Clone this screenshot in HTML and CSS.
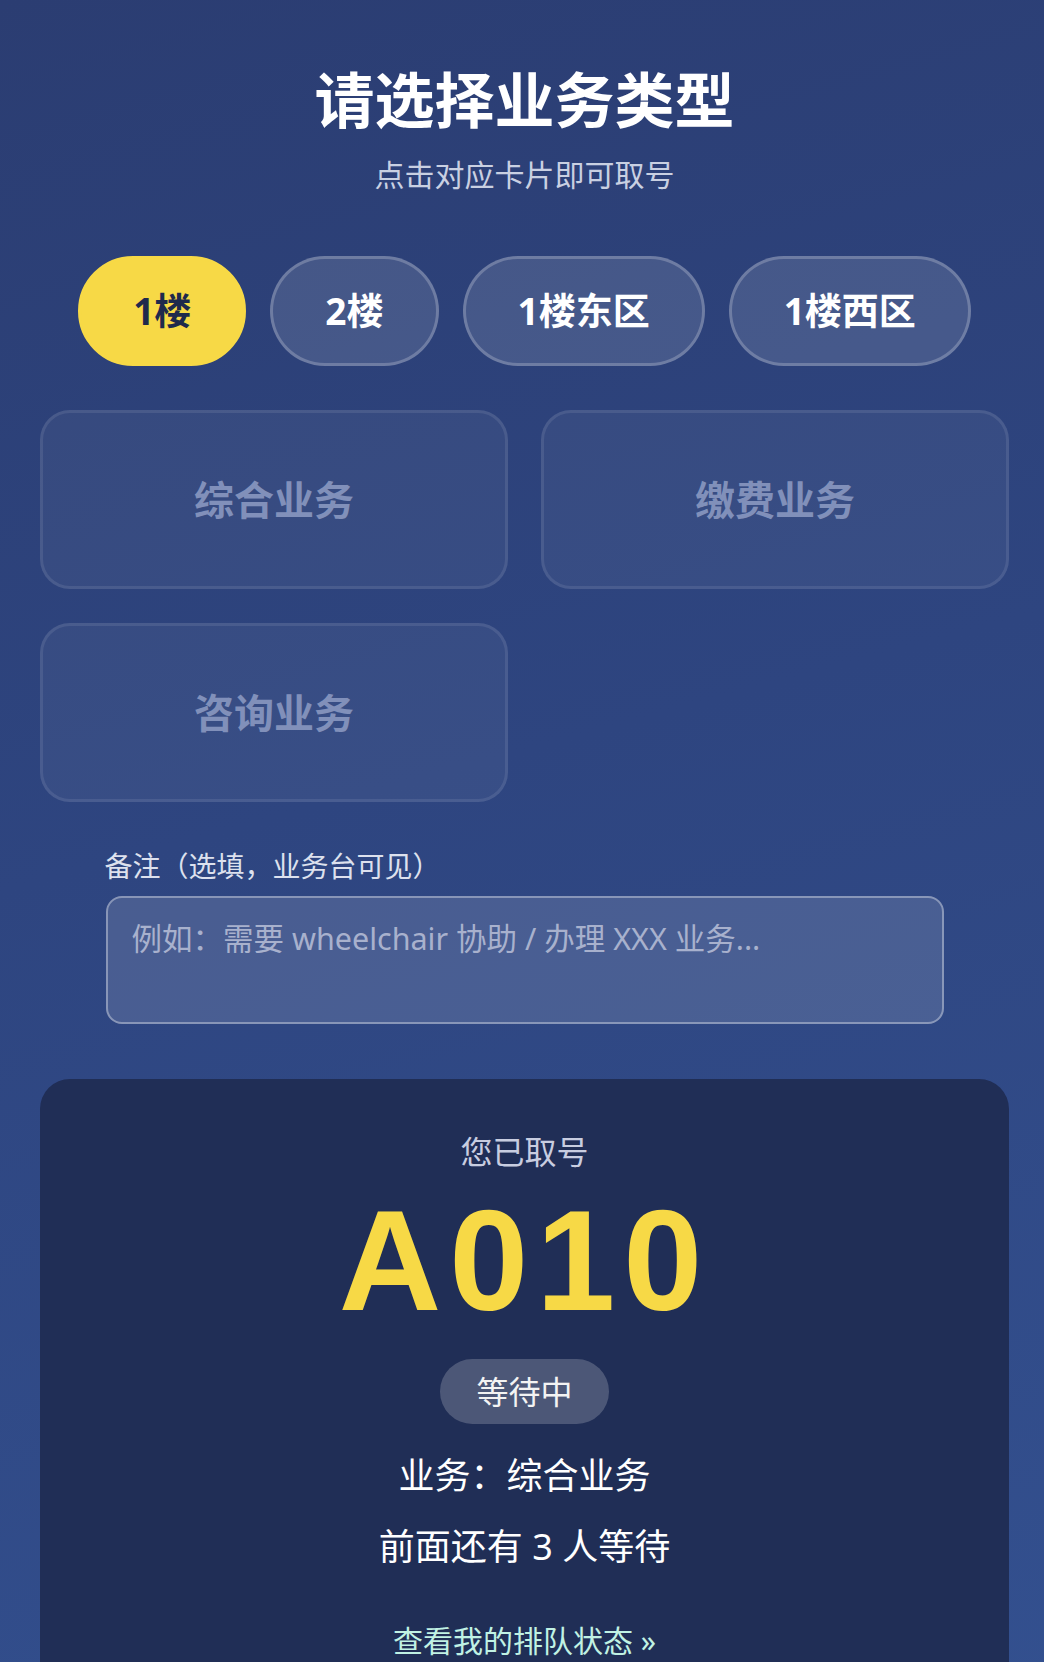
FILE: index.html
```html
<!DOCTYPE html>
<html lang="zh-CN">
<head>
<meta charset="UTF-8">
<meta name="viewport" content="width=device-width, initial-scale=1.0">
<title>取号</title>
<link rel="stylesheet" href="styles.css">
</head>
<body>
<div class="page">
  <header class="header">
    <h1>请选择业务类型</h1>
    <p class="subtitle">点击对应卡片即可取号</p>
  </header>

  <div class="floors">
    <button class="floor active">1楼</button>
    <button class="floor">2楼</button>
    <button class="floor">1楼东区</button>
    <button class="floor">1楼西区</button>
  </div>

  <div class="services">
    <button class="service" disabled>综合业务</button>
    <button class="service" disabled>缴费业务</button>
    <button class="service" disabled>咨询业务</button>
  </div>

  <div class="remark">
    <label class="remark-label" for="remark">备注（选填，业务台可见）</label>
    <textarea id="remark" class="remark-input" placeholder="例如：需要 wheelchair 协助 / 办理 XXX 业务..."></textarea>
  </div>

  <section class="ticket">
    <p class="ticket-title">您已取号</p>
    <div class="ticket-number">A010</div>
    <span class="ticket-status">等待中</span>
    <p class="ticket-line">业务：综合业务</p>
    <p class="ticket-line">前面还有 3 人等待</p>
    <a class="ticket-link" href="#">查看我的排队状态 »</a>
  </section>
</div>
</body>
</html>
```

FILE: styles.css
```css
* {
  box-sizing: border-box;
}

html, body {
  margin: 0;
  padding: 0;
}

body {
  font-family: "Noto Sans", "Noto Sans CJK SC", sans-serif;
  background: linear-gradient(165deg, #2b3d72 0%, #2e4580 45%, #33508f 100%);
  color: #fff;
  min-height: 100vh;
  overflow: hidden;
}

.page {
  padding: 0 35px 0 40px;
}

.header {
  text-align: center;
  padding-top: 64px;
}

h1 {
  margin: 0;
  font-size: 60px;
  line-height: 72px;
  font-weight: 700;
  color: #fff;
}

.subtitle {
  margin: 18px 0 0;
  font-size: 30px;
  line-height: 42px;
  color: #c9d0e2;
}

/* 楼层切换 */
.floors {
  display: flex;
  justify-content: center;
  gap: 24px;
  margin-top: 60px;
}

.floor {
  font-family: inherit;
  font-size: 37px;
  font-weight: 700;
  line-height: 50px;
  padding: 27px 52px;
  border-radius: 60px;
  border: 3px solid rgba(255, 255, 255, 0.22);
  background: rgba(255, 255, 255, 0.12);
  color: #fff;
  cursor: pointer;
}

.floor.active {
  background: #f7d946;
  border-color: #f7d946;
  color: #1f2a4c;
}

/* 业务卡片 */
.services {
  display: grid;
  grid-template-columns: 1fr 1fr;
  column-gap: 33px;
  row-gap: 34px;
  margin-top: 44px;
}

.service {
  height: 179px;
  font-family: inherit;
  font-size: 40px;
  font-weight: 700;
  padding: 0 0 3px;
  border-radius: 30px;
  border: 3px solid rgba(255, 255, 255, 0.09);
  background: rgba(255, 255, 255, 0.05);
  color: #8190ba;
}

/* 备注 */
.remark {
  width: 838px;
  margin: 44px auto 0;
}

.remark-label {
  display: block;
  font-size: 28px;
  line-height: 40px;
  color: #dde1ee;
  margin-bottom: 10px;
  margin-left: -1px;
}

.remark-input {
  display: block;
  width: 100%;
  height: 128px;
  padding: 20px 24px 14px;
  font-family: inherit;
  font-size: 30.5px;
  line-height: 40px;
  color: #fff;
  background: rgba(255, 255, 255, 0.13);
  border: 2px solid rgba(255, 255, 255, 0.35);
  border-radius: 16px;
  resize: none;
}

.remark-input::placeholder {
  color: #a8b1cd;
}

/* 取号结果 */
.ticket {
  margin-top: 55px;
  background: #202e56;
  border-radius: 30px;
  padding: 52px 20px 40px;
  display: flex;
  flex-direction: column;
  align-items: center;
  text-align: center;
}

.ticket-title {
  margin: 0;
  font-size: 32px;
  line-height: 42px;
  color: #c8cde0;
}

.ticket-number {
  margin-top: 17px;
  font-family: "Liberation Sans", Arial, sans-serif;
  font-size: 142px;
  line-height: 142px;
  font-weight: 700;
  letter-spacing: 8px;
  color: #f7d946;
}

.ticket-status {
  margin-top: 27px;
  padding: 10px 36px;
  font-size: 32px;
  line-height: 45px;
  border-radius: 40px;
  background: rgba(255, 255, 255, 0.2);
  color: #f3f3f3;
}

.ticket-line {
  margin: 27px 0 0;
  font-size: 36px;
  line-height: 50px;
  color: #fff;
}

.ticket-line + .ticket-line {
  margin-top: 21px;
}

.ticket-link {
  margin-top: 48px;
  font-size: 30px;
  line-height: 42px;
  color: #c0f2e4;
  text-decoration: none;
}
```
